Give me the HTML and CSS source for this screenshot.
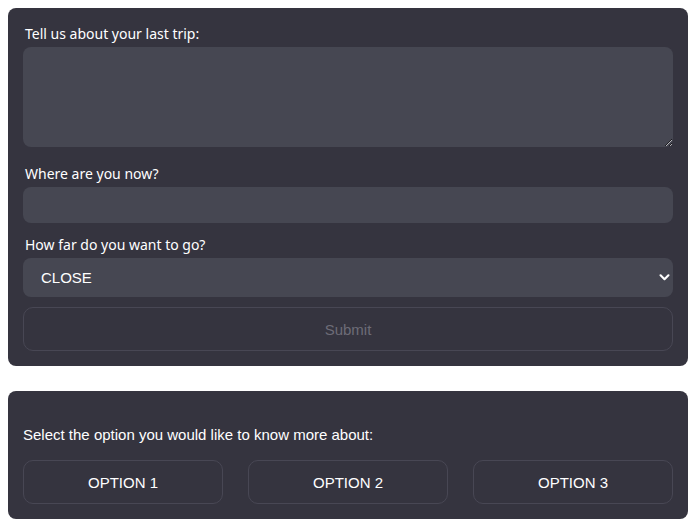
FILE: index.html
```html
<!DOCTYPE html>
<html lang="en">
<head>
<meta charset="utf-8">
<title>Trip</title>
<link rel="stylesheet" href="styles.css">
</head>
<body>
<form class="card trip-form">
  <label class="field-label" for="trip">Tell us about your last trip:</label>
  <textarea id="trip" class="control textarea"></textarea>
  <label class="field-label spaced wide" for="where">Where are you now?</label>
  <input id="where" class="control input" type="text">
  <label class="field-label spaced" for="far">How far do you want to go?</label>
  <select id="far" class="control select">
    <option>CLOSE</option>
    <option>FAR</option>
  </select>
  <button type="button" class="btn submit" disabled>Submit</button>
</form>
<section class="card options">
  <p class="prompt">Select the option you would like to know more about:</p>
  <div class="option-row">
    <button type="button" class="btn option">OPTION 1</button>
    <button type="button" class="btn option">OPTION 2</button>
    <button type="button" class="btn option">OPTION 3</button>
  </div>
</section>
</body>
</html>
```
FILE: styles.css
```css
html, body {
  margin: 0;
  padding: 0;
  background: #ffffff;
}
body {
  padding: 8px;
  display: flex;
  flex-direction: column;
  gap: 25px;
}
.card {
  background: #35343f;
  border-radius: 8px;
  padding: 15px;
  box-sizing: border-box;
  width: 680px;
}
.trip-form {
  display: flex;
  flex-direction: column;
}
.field-label {
  font-family: "Noto Sans", "Open Sans", sans-serif;
  font-size: 14px;
  line-height: 22px;
  color: #ffffff;
  padding-left: 2px;
  margin-bottom: 2px;
}
.field-label.spaced {
  margin-top: 11px;
}
.field-label.spaced.wide {
  margin-top: 16px;
}
.control {
  display: block;
  box-sizing: border-box;
  width: 100%;
  border: none;
  background: #464752;
  color: #ffffff;
  border-radius: 8px;
  font-family: "Liberation Sans", Arial, sans-serif;
  font-size: 15px;
  outline: none;
  margin: 0;
}
.textarea {
  height: 100px;
  resize: vertical;
  padding: 10px 18px;
}
.input {
  height: 36px;
  padding: 0 18px;
}
.select {
  height: 39px;
  padding: 0 18px;
  appearance: none;
  -webkit-appearance: none;
  background-image: url("data:image/svg+xml;utf8,<svg xmlns='http://www.w3.org/2000/svg' width='12' height='8' viewBox='0 0 12 8'><path d='M1.5 1.5 L6 6 L10.5 1.5' fill='none' stroke='white' stroke-width='2.4' stroke-linecap='round' stroke-linejoin='round'/></svg>");
  background-repeat: no-repeat;
  background-position: right 3px center;
  background-size: 11px 7px;
}
.btn {
  box-sizing: border-box;
  height: 44px;
  background: transparent;
  border: 1px solid #484754;
  border-radius: 10px;
  font-family: "Liberation Sans", Arial, sans-serif;
  font-size: 15px;
  color: #ffffff;
  margin: 0;
}
.submit {
  margin-top: 10px;
  width: 100%;
  color: #6d6c77;
}
.options {
  padding-top: 34px;
}
.prompt {
  margin: 0 0 15px;
  font-family: "Liberation Sans", Arial, sans-serif;
  font-size: 15px;
  line-height: 20px;
  color: #ffffff;
}
.option-row {
  display: grid;
  grid-template-columns: 1fr 1fr 1fr;
  gap: 25px;
}
```
